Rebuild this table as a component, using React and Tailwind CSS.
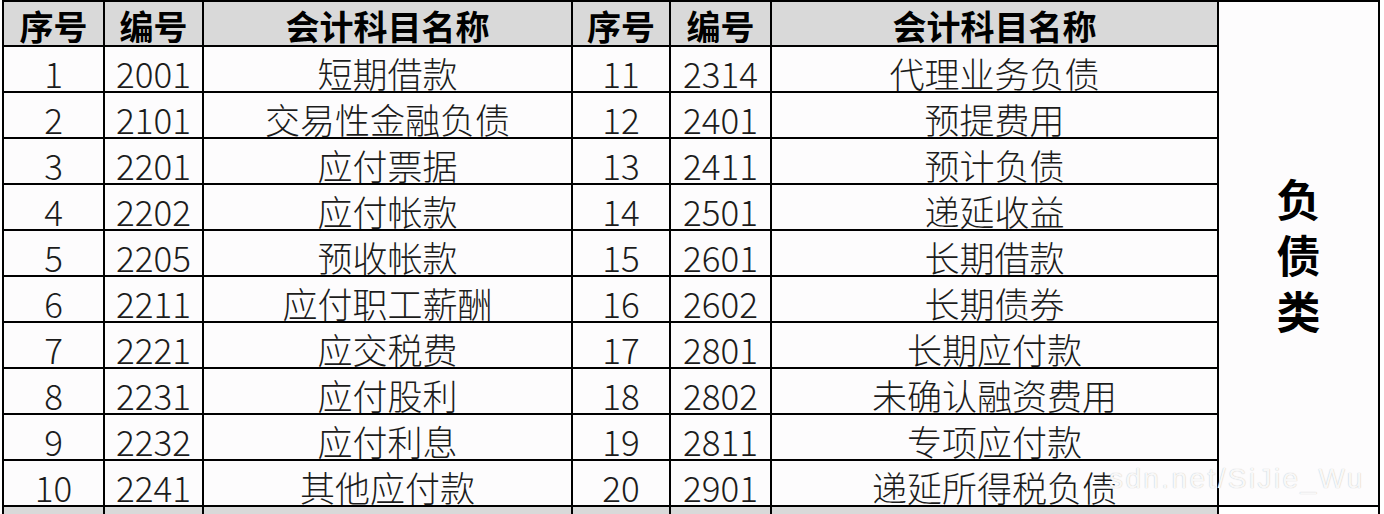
import React from "react";

const leftRows = [
  ["1", "2001", "短期借款"],
  ["2", "2101", "交易性金融负债"],
  ["3", "2201", "应付票据"],
  ["4", "2202", "应付帐款"],
  ["5", "2205", "预收帐款"],
  ["6", "2211", "应付职工薪酬"],
  ["7", "2221", "应交税费"],
  ["8", "2231", "应付股利"],
  ["9", "2232", "应付利息"],
  ["10", "2241", "其他应付款"],
];

const rightRows = [
  ["11", "2314", "代理业务负债"],
  ["12", "2401", "预提费用"],
  ["13", "2411", "预计负债"],
  ["14", "2501", "递延收益"],
  ["15", "2601", "长期借款"],
  ["16", "2602", "长期债券"],
  ["17", "2801", "长期应付款"],
  ["18", "2802", "未确认融资费用"],
  ["19", "2811", "专项应付款"],
  ["20", "2901", "递延所得税负债"],
];

const font = { fontFamily: '"Noto Sans CJK SC", "Noto Sans", sans-serif' };

const th = "border-2 border-black p-0 pt-[4px] text-center align-middle text-[34px] font-bold leading-none text-black";
const td = "border-2 border-black p-0 pt-[6px] text-center align-middle text-[35px] font-light leading-none text-[#1c1c1c]";

export default function App() {
  return (
    <div className="relative h-[514px] w-[1384px] overflow-hidden bg-white" style={font}>
      <table className="ml-[2px] w-[1378px] table-fixed border-collapse">
        <colgroup>
          <col className="w-[101px]" />
          <col className="w-[99px]" />
          <col className="w-[369px]" />
          <col className="w-[98px]" />
          <col className="w-[101px]" />
          <col className="w-[447px]" />
          <col className="w-[161px]" />
        </colgroup>
        <tbody>
          <tr className="h-[45px]">
            <th className={`${th} bg-[#d9d9d9]`}>序号</th>
            <th className={`${th} bg-[#d9d9d9]`}>编号</th>
            <th className={`${th} bg-[#d9d9d9]`}>会计科目名称</th>
            <th className={`${th} bg-[#d9d9d9]`}>序号</th>
            <th className={`${th} bg-[#d9d9d9]`}>编号</th>
            <th className={`${th} bg-[#d9d9d9]`}>会计科目名称</th>
            <td
              rowSpan={11}
              className="border-2 border-black bg-[#fdfcfd] p-0 align-middle text-[44px] font-bold leading-none text-black"
            >
              <div className="flex flex-col items-center gap-[12px]">
                <span>负</span>
                <span>债</span>
                <span>类</span>
              </div>
            </td>
          </tr>
          {leftRows.map((l, i) => {
            const r = rightRows[i];
            return (
              <tr key={l[0]} className="h-[46px] bg-[#fdfcfd]">
                <td className={td}>{l[0]}</td>
                <td className={td}>{l[1]}</td>
                <td className={td}>{l[2]}</td>
                <td className={td}>{r[0]}</td>
                <td className={td}>{r[1]}</td>
                <td className={td}>{r[2]}</td>
              </tr>
            );
          })}
          <tr className="h-[46px]">
            <td className={`${th} bg-[#d9d9d9]`}></td>
            <td className={`${th} bg-[#d9d9d9]`}></td>
            <td className={`${th} bg-[#d9d9d9]`}></td>
            <td className={`${th} bg-[#d9d9d9]`}></td>
            <td className={`${th} bg-[#d9d9d9]`}></td>
            <td className={`${th} bg-[#d9d9d9]`}></td>
            <td className={`${th} bg-white`}></td>
          </tr>
        </tbody>
      </table>

      {/* watermark */}
      <div
        className="pointer-events-none absolute left-[1109px] top-[465px] whitespace-nowrap text-[28px] leading-none tracking-[2.4px] text-white/90 [text-shadow:0_0_1px_#b3b3b3]"
        style={{ fontFamily: '"Liberation Sans", Arial, sans-serif' }}
      >
        sdn.net/SiJie_Wu
      </div>
    </div>
  );
}
